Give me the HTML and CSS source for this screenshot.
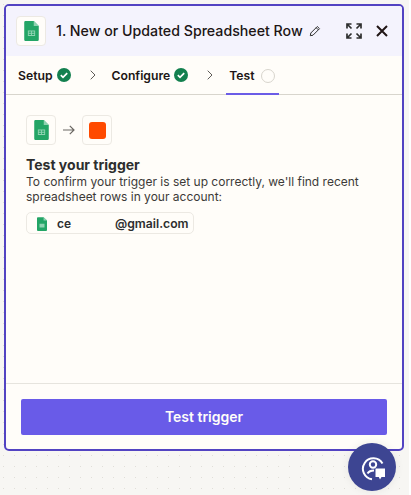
FILE: index.html
```html
<!DOCTYPE html>
<html lang="en">
<head>
<meta charset="utf-8">
<title>Test trigger</title>
<link rel="stylesheet" href="styles.css">
</head>
<body>
<div class="canvas">
  <section class="panel">
    <header class="head">
      <span class="app-box">
        <svg class="sheet-lg" viewBox="0 0 16 22"><path d="M1.5 0H10.500L16 5.500V20.500A1.500 1.500 0 0 1 14.500 22H1.500A1.500 1.500 0 0 1 0 20.500V1.500A1.500 1.500 0 0 1 1.500 0Z" fill="#23a566"/><path d="M10.500 0L16 5.500H10.500Z" fill="#8ed1b1"/><path d="M4 10.500H12V16.500H4ZM5 11.500V13H7.500V11.500ZM8.500 11.500V13H11V11.500ZM5 14V15.500H7.500V14ZM8.500 14V15.500H11V14Z" fill="#8fd3b2" fill-rule="evenodd"/></svg>
      </span>
      <h1 class="title">1. New or Updated Spreadsheet Row</h1>
      <svg class="pencil" viewBox="0 0 12 12"><path d="M8.300 1.500L10.500 3.700L4 10.200L1.300 10.700L1.800 8Z M7.200 2.700L9.300 4.800" fill="none" stroke="#2d2e2e" stroke-width="1"/></svg>
      <svg class="expand" viewBox="0 0 16 16"><path d="M1 5.500V1H5.500M1 1L5.500 5.500M15 5.500V1H10.500M15 1L10.500 5.500M1 10.500V15H5.500M1 15L5.500 10.500M15 10.500V15H10.500M15 15L10.500 10.500" fill="none" stroke="#2d2e2e" stroke-width="1.700"/></svg>
      <svg class="close" viewBox="0 0 12 12"><path d="M1 1L11 11M11 1L1 11" fill="none" stroke="#201515" stroke-width="2"/></svg>
    </header>
    <nav class="tabs">
      <span class="tab">Setup
        <svg class="check" viewBox="0 0 14 14"><circle cx="7" cy="7" r="7" fill="#13804f"/><path d="M3.800 7.200L6 9.300L10.200 5.100" fill="none" stroke="#fff" stroke-width="1.700"/></svg>
      </span>
      <svg class="chev" viewBox="0 0 6 10"><path d="M.7 .7L5 5L.7 9.300" fill="none" stroke="#5f5c58" stroke-width="1"/></svg>
      <span class="tab">Configure
        <svg class="check" viewBox="0 0 14 14"><circle cx="7" cy="7" r="7" fill="#13804f"/><path d="M3.800 7.200L6 9.300L10.200 5.100" fill="none" stroke="#fff" stroke-width="1.700"/></svg>
      </span>
      <svg class="chev" viewBox="0 0 6 10"><path d="M.7 .7L5 5L.7 9.300" fill="none" stroke="#5f5c58" stroke-width="1"/></svg>
      <span class="tab tab-active">Test <span class="ring"></span></span>
    </nav>
    <main class="body">
      <div class="flow">
        <span class="flow-box">
          <svg class="sheet-lg" viewBox="0 0 16 22"><path d="M1.500 0H10.500L16 5.500V20.500A1.500 1.500 0 0 1 14.500 22H1.500A1.500 1.500 0 0 1 0 20.500V1.500A1.500 1.500 0 0 1 1.500 0Z" fill="#23a566"/><path d="M10.500 0L16 5.500H10.500Z" fill="#8ed1b1"/><path d="M4 10.500H12V16.500H4ZM5 11.500V13H7.500V11.500ZM8.500 11.500V13H11V11.500ZM5 14V15.500H7.500V14ZM8.500 14V15.500H11V14Z" fill="#8fd3b2" fill-rule="evenodd"/></svg>
        </span>
        <svg class="arrow" viewBox="0 0 12 10"><path d="M0 5H11M6.800 .8L11 5L6.800 9.200" fill="none" stroke="#6b6864" stroke-width="1.200"/></svg>
        <span class="flow-box"><span class="orange"></span></span>
      </div>
      <h2 class="heading">Test your trigger</h2>
      <p class="desc">To confirm your trigger is set up correctly, we'll find recent spreadsheet rows in your account:</p>
      <div class="account">
        <svg class="sheet-sm" viewBox="0 0 16 22"><path d="M1.500 0H10.500L16 5.500V20.500A1.500 1.500 0 0 1 14.500 22H1.500A1.500 1.500 0 0 1 0 20.500V1.500A1.500 1.500 0 0 1 1.500 0Z" fill="#23a566"/><path d="M10.500 0L16 5.500H10.500Z" fill="#8ed1b1"/><path d="M4 10.500H12V16.500H4Z" fill="#8fd3b2"/></svg>
        <span class="acct-a">ce</span><span class="acct-b">@gmail.com</span>
      </div>
    </main>
    <footer class="foot">
      <button class="cta" type="button">Test trigger</button>
    </footer>
  </section>
  <button class="help" type="button" aria-label="Help">
    <svg viewBox="0 0 24 24"><path d="M21.500 6.500A10.500 10.500 0 1 0 11 22.200" fill="none" stroke="#fff" stroke-width="2"/><circle cx="12" cy="7.500" r="3.200" fill="none" stroke="#fff" stroke-width="2"/><path d="M6.500 16.500C8 14 10.500 13.500 13 13.500" fill="none" stroke="#fff" stroke-width="2"/><path d="M14.500 11.500H24V20H20.500L19 22.500L17.800 20H14.500Z" fill="#fff"/></svg>
  </button>
</div>
</body>
</html>
```
FILE: styles.css
```css
* { box-sizing: border-box; }
html, body { margin: 0; height: 100%; background: #fff; }
body { font-family: Inter, "Liberation Sans", sans-serif; color: #2d2e2e; overflow: hidden; }
.canvas {
  position: relative;
  width: 409px;
  height: 495px;
  padding: 4px 5px 0 4px;
  background-color: #f7f6f3;
  background-image: radial-gradient(circle, #e0ded8 0.8px, transparent 1px);
  background-size: 11px 11px;
  background-position: -2px -1px;
}
.panel {
  display: flex;
  flex-direction: column;
  height: 447px;
  border: 2px solid #5243c2;
  border-radius: 5px;
  background: #fffdf9;
  overflow: hidden;
}
.head {
  display: flex;
  align-items: center;
  height: 50px;
  flex: none;
  padding: 0 10px 0 10px;
  background: #f4f3fd;
}
.app-box {
  display: flex;
  align-items: center;
  justify-content: center;
  width: 30px;
  height: 30px;
  border: 1px solid #ece9e3;
  border-radius: 4px;
  background: #fffdf9;
  flex: none;
}
.sheet-lg { width: 15px; height: 20px; }
.title {
  margin: 0 0 0 10px;
  font-size: 14.2px;
  font-weight: 500;
  line-height: 20px;
  white-space: nowrap;
  color: #201515;
}
.pencil { width: 12px; height: 12px; margin-left: 6px; flex: none; }
.expand { width: 16px; height: 16px; margin-left: 25px; flex: none; }
.close { width: 12px; height: 12px; margin-left: 14px; flex: none; }
.tabs {
  display: flex;
  align-items: center;
  height: 39px;
  flex: none;
  padding: 0 0 0 12px;
  border-bottom: 1px solid #d8d5cd;
}
.tab {
  display: inline-flex;
  align-items: center;
  gap: 4px;
  height: 38px;
  font-size: 12.2px;
  font-weight: 600;
  color: #201515;
}
.check { width: 14px; height: 14px; flex: none; }
.chev { width: 6px; height: 10px; margin: 0 16px 0 19px; flex: none; }
.tab-active {
  position: relative;
  align-self: flex-start;
  gap: 6px;
  margin-left: -3px;
  padding: 2px 3px 0;
  width: 53px;
  height: 39px;
  border-bottom: 2px solid #6b5ce7;
}
.ring {
  width: 14px;
  height: 14px;
  border: 1.5px solid #d8d5cd;
  border-radius: 50%;
  flex: none;
}
.body { flex: 1; padding: 20px 20px 0; }
.flow { display: flex; align-items: center; gap: 7px; }
.flow-box {
  display: flex;
  align-items: center;
  justify-content: center;
  width: 30px;
  height: 30px;
  border: 1px solid #ece9e3;
  border-radius: 4px;
}
.arrow { width: 12px; height: 10px; flex: none; }
.orange { width: 17px; height: 17px; border-radius: 3px; background: #ff4a00; }
.heading {
  margin: 11px 0 0;
  font-size: 14px;
  font-weight: 700;
  line-height: 18px;
  color: #2d2e2e;
}
.desc {
  margin: 0;
  font-size: 12px;
  line-height: 15px;
  color: #3c3a38;
}
.account {
  display: flex;
  align-items: center;
  width: 168px;
  height: 22px;
  margin-top: 8px;
  padding: 1px 0 0 10px;
  border: 1px solid #ece9e3;
  border-radius: 5px;
}
.sheet-sm { width: 10px; height: 14px; flex: none; }
.acct-a { margin-left: 10px; font-size: 12px; font-weight: 600; width: 58px; }
.acct-b { font-size: 12.2px; font-weight: 600; }
.foot {
  flex: none;
  height: 66px;
  padding: 15px 15px 0;
  border-top: 1px solid #e6e4de;
}
.cta {
  display: block;
  width: 100%;
  height: 36px;
  padding: 0 0 2px;
  border: 0;
  border-radius: 2px;
  background: #695be8;
  color: #fffdf9;
  font: 600 14px Inter, "Liberation Sans", sans-serif;
}
.help {
  position: absolute;
  left: 348px;
  top: 443px;
  display: flex;
  align-items: center;
  justify-content: center;
  width: 48px;
  height: 48px;
  padding: 3px 0 0 1px;
  border: 0;
  border-radius: 50%;
  background: #3d4592;
  box-shadow: 0 0 8px rgba(0,0,0,.08);
}
.help svg { width: 24px; height: 24px; }
```
